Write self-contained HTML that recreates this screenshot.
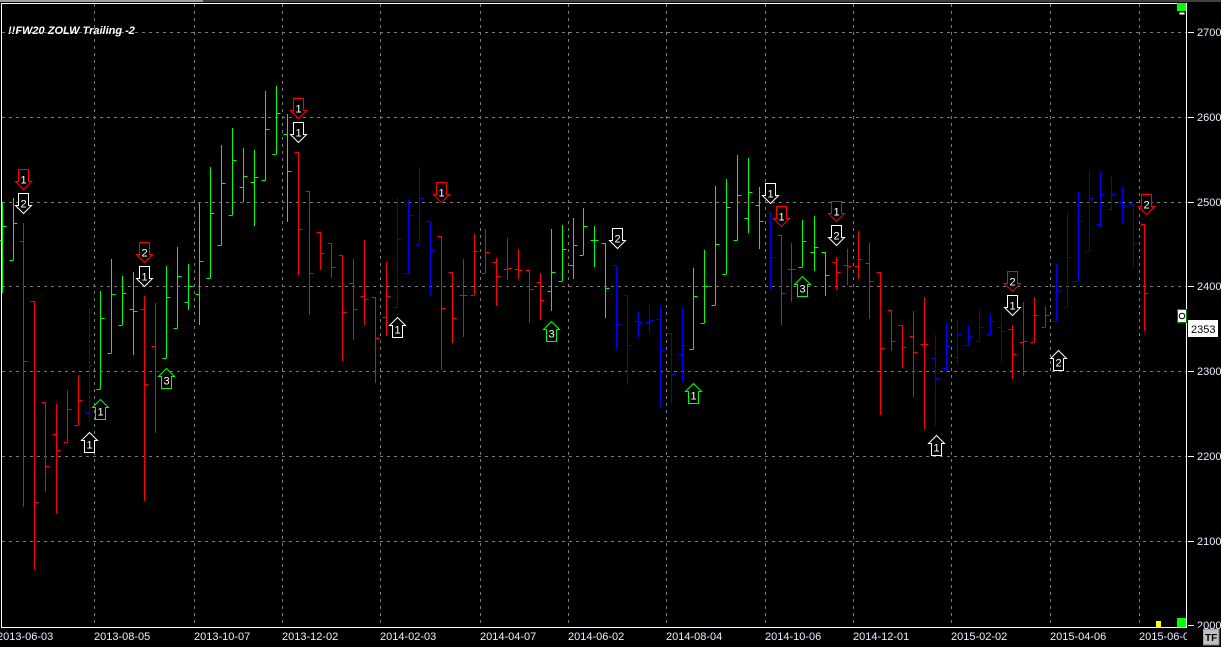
<!DOCTYPE html>
<html><head><meta charset="utf-8"><style>
html,body{margin:0;padding:0;background:#000;width:1221px;height:647px;overflow:hidden}
svg{display:block}
text{font-family:"Liberation Sans",Arial,sans-serif}
</style></head><body>
<svg id="c" width="1221" height="647" xmlns="http://www.w3.org/2000/svg" shape-rendering="crispEdges">
<rect width="1221" height="647" fill="#000"/>
<rect x="0" y="0" width="203" height="2" fill="#a0a0a0"/>
<rect x="203" y="0" width="1018" height="2" fill="#404040"/>
<g id="grid" stroke="#7a7a7a" stroke-width="1" stroke-dasharray="3,4"></g>
<g id="bars" stroke-width="1" fill="none"></g>
<g id="arrows"></g>
<!-- frame -->
<path d="M1.5 3 V627.5 H1186.5 V3.5 H1.5" stroke="#fff" fill="none"/>
<rect x="1177" y="3" width="9" height="8" fill="#00ff00"/>
<rect x="1179" y="12" width="6" height="3" fill="#fff" stroke="#000" stroke-width="1"/>
<rect x="1177" y="618" width="9" height="9" fill="#00ff00"/>
<rect x="1156" y="621" width="5" height="6" fill="#ffff00"/>
<rect x="1177.5" y="309.5" width="9" height="13" fill="#fff" stroke="#008000"/>
<circle cx="1182" cy="316" r="2.8" fill="none" stroke="#000" shape-rendering="auto"/>
<rect x="1188" y="320" width="30" height="17" fill="#fff"/>
<text x="1191" y="333" font-size="11" fill="#000">2353</text>
<rect x="1203" y="629" width="16" height="16" fill="#c0c0c0" stroke="#808080"/>
<text x="1205" y="641" font-size="10" font-weight="bold" fill="#000">TF</text>
<text x="8" y="34" font-size="11" font-weight="bold" font-style="italic" fill="#fff">!!FW20 ZOLW Trailing -2</text>
<g font-size="11" fill="#e8eeff">
<text x="1197" y="36">2700</text><text x="1197" y="121">2600</text><text x="1197" y="206">2500</text>
<text x="1197" y="290">2400</text><text x="1197" y="375">2300</text><text x="1197" y="460">2200</text>
<text x="1197" y="545">2100</text><text x="1197" y="629">2000</text>
</g>
<g font-size="11" fill="#e8eeff">
<text x="-3" y="640">2013-06-03</text><text x="94" y="640">2013-08-05</text><text x="194" y="640">2013-10-07</text>
<text x="282" y="640">2013-12-02</text><text x="380" y="640">2014-02-03</text><text x="480" y="640">2014-04-07</text>
<text x="568" y="640">2014-06-02</text><text x="666" y="640">2014-08-04</text><text x="765" y="640">2014-10-06</text>
<text x="853" y="640">2014-12-01</text><text x="951" y="640">2015-02-02</text><text x="1050" y="640">2015-04-06</text>
<text x="1139" y="640">2015-06-0</text>
</g>
<rect x="1187" y="628" width="16" height="19" fill="#000"/>
<g id="lbl"></g>
</svg>
<script>
var ns="http://www.w3.org/2000/svg";
function el(p,t,a){var e=document.createElementNS(ns,t);for(var k in a)e.setAttribute(k,a[k]);p.appendChild(e);return e;}
var g=document.getElementById('grid');
[94,194,282,380,480,568,666,765,853,951,1050,1139].forEach(function(x){el(g,'line',{x1:x+.5,y1:4,x2:x+.5,y2:627});});
[32,117,202,286,371,456,541].forEach(function(y){el(g,'line',{x1:2,y1:y+.5,x2:1186,y2:y+.5});});
var fr=document.querySelector('svg');
[32,117,202,286,371,456,541,625].forEach(function(y){el(fr,'line',{x1:1188,y1:y+.5,x2:1194,y2:y+.5,stroke:'#fff'});});
var C={g:'#00ff00',r:'#ff0000',b:'#0000ff'};
var B=[
[2,'g',202,293,240,226],[13,'g',198,260,260,223],[23,'r',223,507,241,361],[34,'r',301,570,301,502],
[45,'r',402,492,402,466],[56,'r',404,513,434,450],[67,'r',390,442,442,409],[78,'r',375,425,425,400],
[89,'b',309,421,412,365],[100,'g',291,389,389,318],[111,'g',259,353,353,294],[122,'g',276,325,325,293],
[133,'g',272,355,309,311],[144,'r',296,501,309,384],[155,'r',303,433,346,371],[166,'g',266,358,358,297],
[177,'g',247,328,328,276],[188,'g',264,310,302,286],[199,'g',203,325,294,261],[210,'g',167,278,278,213],
[221,'g',145,245,245,183],[232,'g',128,215,215,160],[243,'g',148,202,187,176],[254,'g',150,226,182,177],
[265,'g',91,180,180,129],[276,'g',86,154,154,113],[287,'g',114,222,134,171],[298,'r',152,275,152,229],
[309,'r',191,315,191,273],[320,'r',232,270,232,253],[331,'r',243,278,243,267],[342,'r',255,361,255,312],
[353,'r',259,340,283,309],[364,'r',240,325,296,299],[375,'r',297,383,297,338],[386,'r',262,336,317,296],
[397,'b',198,307,307,239],[408,'b',199,273,273,215],[419,'b',167,244,244,198],[430,'b',221,295,221,250],
[441,'r',236,370,236,308],[452,'r',272,343,272,318],[463,'r',259,337,295,295],[474,'r',234,295,295,251],
[485,'r',229,273,273,252],[496,'r',258,306,262,276],[507,'r',238,280,269,268],[518,'r',249,279,269,270],
[529,'r',270,323,270,289],[540,'r',273,320,282,300],[551,'g',229,311,291,272],[562,'g',225,281,281,249],
[573,'g',218,279,265,245],[583,'g',208,255,255,226],[594,'g',226,267,240,240],[605,'g',243,318,243,288],
[616,'b',265,349,265,324],[627,'b',295,385,295,345],[638,'b',312,337,321,322],[649,'b',304,334,322,320],
[660,'b',305,407,319,350],[671,'b',333,403,333,374],[682,'b',308,381,354,345],[693,'g',268,349,349,296],
[704,'g',250,323,323,286],[715,'g',186,305,305,244],[726,'g',179,274,274,207],[737,'g',155,240,240,195],
[748,'g',158,233,218,192],[759,'g',187,249,205,221],[770,'b',213,290,213,257],[781,'r',235,325,235,293],
[791,'r',243,302,269,269],[802,'g',220,267,267,241],[814,'g',216,271,252,247],[825,'g',252,296,252,275],
[836,'r',257,290,262,272],[847,'r',249,285,265,266],[858,'r',231,279,266,259],[869,'r',243,319,263,281],
[880,'r',272,415,272,348],[891,'r',310,351,310,341],[902,'r',325,368,325,347],[913,'r',311,397,336,352],
[924,'r',297,430,344,344],[935,'b',335,426,358,378],[946,'b',323,372,368,346],[957,'b',319,364,357,334],
[968,'b',326,345,345,336],[979,'b',309,341,341,327],[990,'b',313,335,334,321],[1001,'b',313,363,327,331],
[1012,'r',325,379,329,354],[1023,'r',302,376,342,341],[1034,'r',297,342,342,315],[1045,'r',306,327,327,315],
[1056,'b',264,321,321,290],[1067,'b',213,307,307,257],[1078,'b',192,281,281,221],[1089,'b',170,251,251,198],
[1100,'b',172,227,224,194],[1111,'b',176,211,209,194],[1122,'b',186,223,202,206],[1133,'b',204,267,204,243],
[1144,'r',224,331,224,293]];
var bg=document.getElementById('bars');
B.forEach(function(b){var x=b[0]+.5;el(bg,'path',{stroke:C[b[1]],d:'M'+x+' '+b[2]+'V'+b[3]+'M'+(x-4)+' '+(b[4]+.5)+'H'+x+'M'+x+' '+(b[5]+.5)+'H'+(x+4)});});
var A=[[23,169,'d','r','1'],[23,193,'d','w','2'],[298,98,'d','r','1'],[298,122,'d','w','1'],
[144,242,'d','r','2'],[144,266,'d','w','1'],[100,399,'u','g','1'],[89,432,'u','w','1'],[166,368,'u','g','3'],
[441,182,'d','r','1'],[397,317,'u','w','1'],[551,321,'u','g','3'],[617,228,'d','w','2'],[770,183,'d','w','1'],
[781,206,'d','r','1'],[836,201,'d','r','1'],[836,225,'d','w','2'],[802,276,'u','g','3'],[693,383,'u','g','1'],
[1012,271,'d','r','2'],[1012,295,'d','w','1'],[936,435,'u','w','1'],[1058,350,'u','w','2'],[1146,194,'d','r','2']];
var AC={r:'#ff0000',w:'#ffffff',g:'#00ff00'};
var ag=document.getElementById('arrows');
A.forEach(function(a){var c=a[0]+.5,y=a[1]+.5,d;
if(a[2]=='d'){d='M'+(c-5)+' '+y+'H'+(c+5)+'V'+(y+12)+'H'+(c+8)+'L'+c+' '+(y+20)+'L'+(c-8)+' '+(y+12)+'H'+(c-5)+'Z';}
else{d='M'+(c-5)+' '+(y+20)+'H'+(c+5)+'V'+(y+8)+'H'+(c+8)+'L'+c+' '+y+'L'+(c-8)+' '+(y+8)+'H'+(c-5)+'Z';}
el(ag,'path',{d:d,stroke:AC[a[3]],fill:'#000','shape-rendering':'auto'});
var t=el(ag,'text',{x:c,y:(a[2]=='d'?y+14:y+16),'font-size':'11',fill:'#fff','text-anchor':'middle'});t.textContent=a[4];});
</script>
</body></html>
